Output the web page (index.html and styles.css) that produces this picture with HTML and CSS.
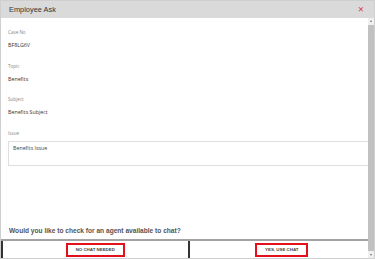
FILE: index.html
```html
<!DOCTYPE html>
<html lang="en">
<head>
  <meta charset="UTF-8" />
  <meta name="viewport" content="width=device-width, initial-scale=1.0">
  <title>Employee Ask</title>
  <link rel="stylesheet" href="styles.css">
</head>
<body>
  <div class="modal">
    <div class="modal-header">
      <span class="modal-title">Employee Ask</span>
      <span class="close-btn">&#x2715;</span>
    </div>

    <div class="modal-body">
      <div class="field">
        <div class="field-label">Case No</div>
        <div class="field-value">BF8LG6V</div>
      </div>
      <div class="field">
        <div class="field-label">Topic</div>
        <div class="field-value">Benefits</div>
      </div>
      <div class="field">
        <div class="field-label">Subject</div>
        <div class="field-value">Benefits Subject</div>
      </div>
      <div class="field">
        <div class="field-label">Issue</div>
        <div class="issue-box">Benefits Issue</div>
      </div>

      <div class="question">Would you like to check for an agent available to chat?</div>

      <div class="chat-actions">
        <div class="action-cell"><button class="action-btn">No chat needed</button></div>
        <div class="action-cell"><button class="action-btn">Yes, use chat</button></div>
      </div>

      <!-- fake scrollbar laid over the right edge -->
      <div class="scrollbar">
        <span class="arrow up"></span>
        <span class="thumb"></span>
        <span class="arrow down"></span>
      </div>
    </div>
  </div>
</body>
</html>
```

FILE: styles.css
```css
html, body {
  margin: 0;
  padding: 0;
}

body {
  font-family: "Open Sans", "Liberation Sans", sans-serif;
  color: #333;
  background: #fff;
}

.modal {
  box-sizing: border-box;
  width: 375px;
  height: 259px;
  border: 1px solid #cfcfcf;
  display: flex;
  flex-direction: column;
}

.modal-header {
  height: 17px;
  background: #dadada;
  display: flex;
  align-items: center;
  justify-content: space-between;
  padding: 0 10px 0 8px;
  flex-shrink: 0;
}

.modal-title {
  font-family: "Liberation Sans", Arial, sans-serif;
  font-size: 7.4px;
  color: #333;
}

.close-btn {
  font-family: "DejaVu Sans", sans-serif;
  font-size: 7.5px;
  color: #d9363e;
  font-weight: bold;
}

.modal-body {
  position: relative;
  flex: 1;
  display: flex;
  flex-direction: column;
  padding-top: 10px;
}

.field {
  padding: 0 7px;
  margin-bottom: 12.5px;
}

.field-label {
  font-size: 4.6px;
  line-height: 8px;
  color: #888;
}

.field-value {
  font-size: 5.3px;
  line-height: 8px;
  margin-top: 5px;
  color: #333;
}

.issue-box {
  box-sizing: border-box;
  margin-top: 4px;
  margin-right: -7px;
  height: 25px;
  border: 1px solid #dedede;
  padding: 2px 4px;
  font-size: 5.3px;
  line-height: 8px;
  color: #444;
}

.question {
  margin-top: auto;
  padding: 0 8px;
  font-family: "Liberation Sans", Arial, sans-serif;
  font-weight: bold;
  font-size: 6.6px;
  line-height: 10px;
  color: #555;
  margin-bottom: 3px;
}

.chat-actions {
  display: flex;
  height: 17px;
  border-top: 2px solid #a3a3a3;
}

.action-cell {
  flex: 1;
  display: flex;
  align-items: center;
  justify-content: center;
  border-left: 2px solid #333;
}

.action-btn {
  font-family: "Liberation Sans", Arial, sans-serif;
  font-weight: bold;
  font-size: 4.4px;
  text-transform: uppercase;
  color: #444;
  background: #fff;
  border: 2px solid #e3101c;
  height: 14px;
  padding: 0 8px;
  cursor: pointer;
}

.scrollbar {
  position: absolute;
  top: 0;
  right: 0;
  bottom: 0;
  width: 6px;
  background: #f0f0f0;
  display: flex;
  flex-direction: column;
  align-items: center;
}

.thumb {
  flex: 1;
  width: 6px;
  background: #c1c1c1;
  margin: 1px 0;
}

.arrow {
  width: 0;
  height: 0;
  margin: 2px 0;
  border-left: 1.5px solid transparent;
  border-right: 1.5px solid transparent;
}

.arrow.up {
  border-bottom: 2px solid #777;
}

.arrow.down {
  border-top: 2px solid #777;
}
```
